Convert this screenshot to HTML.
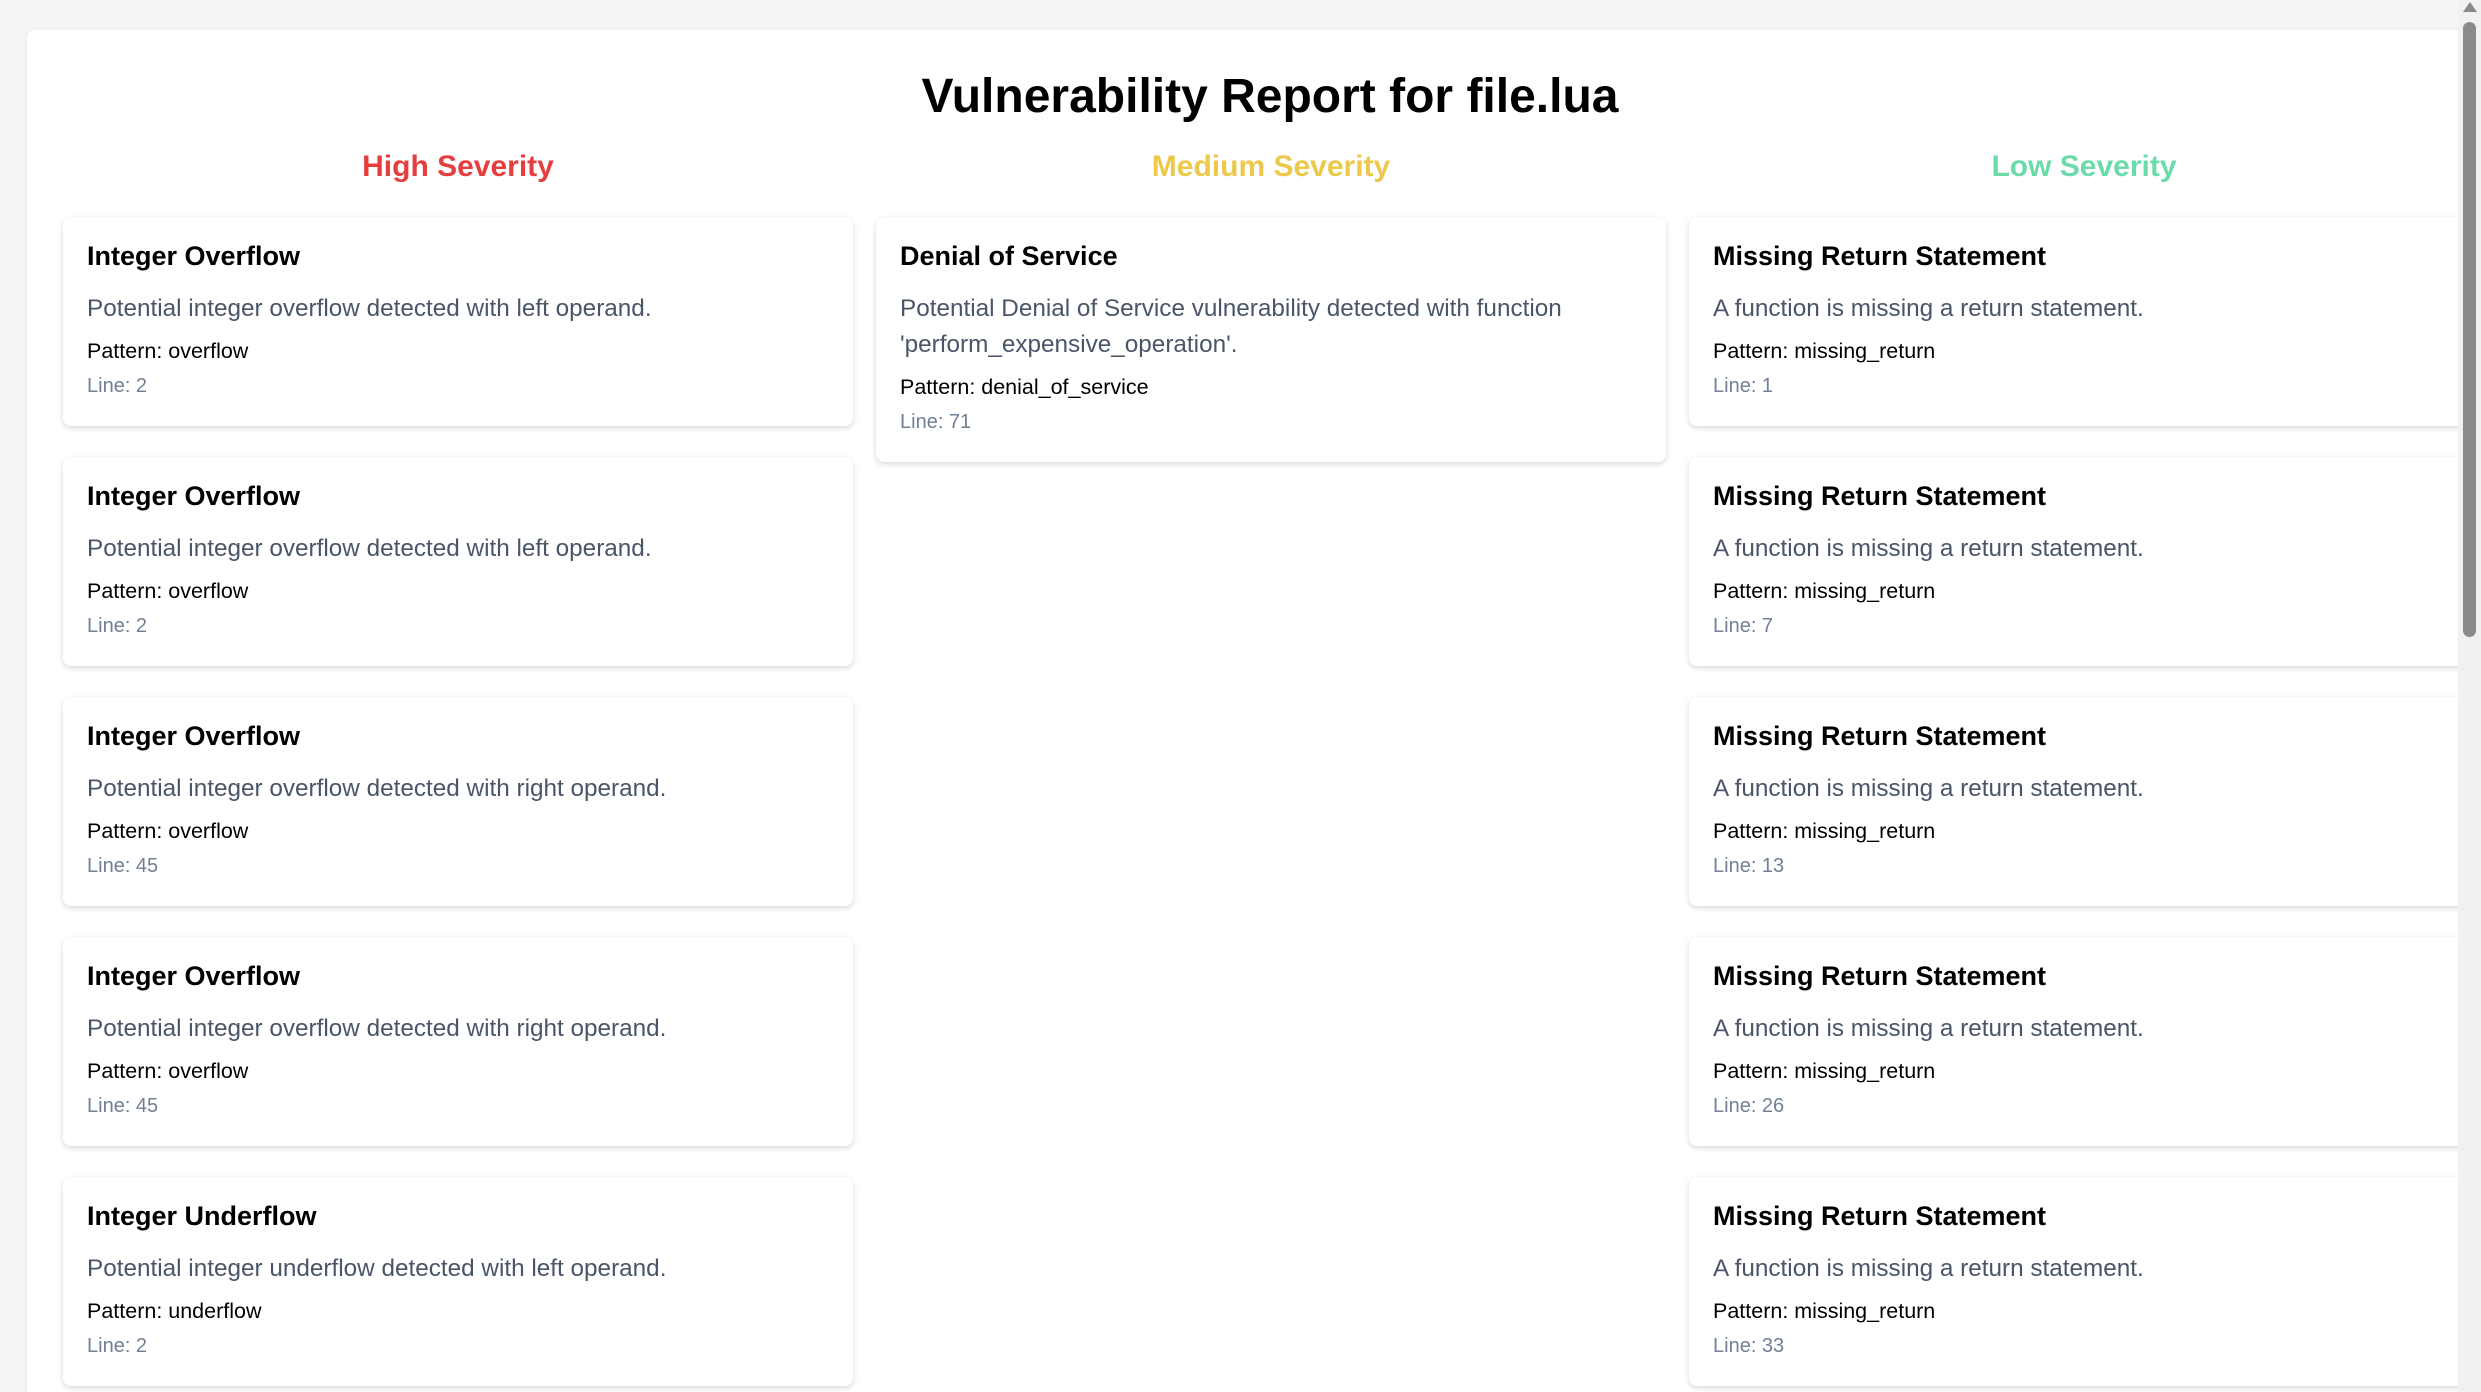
<!DOCTYPE html>
<html><head><meta charset="utf-8"><style>
*{margin:0;padding:0;box-sizing:border-box}
html,body{width:2481px;height:1392px;overflow:hidden;background:#f3f4f6;font-family:"Liberation Sans",Arial,sans-serif}
.wrap{position:absolute;left:27px;top:30px;width:2431px;height:1362px;background:#fff;border-radius:8px 0 0 0;box-shadow:0 1px 4px rgba(0,0,0,.06)}
.sb{position:absolute;left:2458px;top:0;width:23px;height:1392px;background:#f1f1f1}
.sb .th{position:absolute;left:5px;top:22px;width:13px;height:615px;background:#8a8a8a;border-radius:7px}
.sb .ar{position:absolute;left:5px;top:2px;width:0;height:0;border-left:7px solid transparent;border-right:7px solid transparent;border-bottom:10px solid #8a8a8a}
h1{position:absolute;left:0;width:2540px;top:68px;text-align:center;font-size:48px;line-height:58px;font-weight:bold;color:#000}
.h{position:absolute;top:148px;width:790px;text-align:center;font-size:30px;line-height:38px;font-weight:bold}
.card{position:absolute;width:790px;height:209px;background:#fff;border-radius:8px;box-shadow:0 2px 6px rgba(0,0,0,.16)}
.card div{position:absolute;left:24px;white-space:nowrap}
.t{top:23px;font-size:27px;line-height:32px;font-weight:bold;color:#000}
.d{top:74px;font-size:24.3px;line-height:36px;color:#4a5568}
.p{top:121px;font-size:21.5px;line-height:26px;color:#000}
.l{top:156px;font-size:20px;line-height:26px;color:#718096}
</style></head><body>
<div class="wrap"></div>
<h1>Vulnerability Report for file.lua</h1>
<div class="h" style="left:63px;color:#e53e3e">High Severity</div>
<div class="h" style="left:876px;color:#ecc94b">Medium Severity</div>
<div class="h" style="left:1689px;color:#6cdba9">Low Severity</div>

<div class="card" style="left:63px;top:217px"><div class="t">Integer Overflow</div><div class="d">Potential integer overflow detected with left operand.</div><div class="p">Pattern: overflow</div><div class="l">Line: 2</div></div>
<div class="card" style="left:63px;top:457px"><div class="t">Integer Overflow</div><div class="d">Potential integer overflow detected with left operand.</div><div class="p">Pattern: overflow</div><div class="l">Line: 2</div></div>
<div class="card" style="left:63px;top:697px"><div class="t">Integer Overflow</div><div class="d">Potential integer overflow detected with right operand.</div><div class="p">Pattern: overflow</div><div class="l">Line: 45</div></div>
<div class="card" style="left:63px;top:937px"><div class="t">Integer Overflow</div><div class="d">Potential integer overflow detected with right operand.</div><div class="p">Pattern: overflow</div><div class="l">Line: 45</div></div>
<div class="card" style="left:63px;top:1177px"><div class="t">Integer Underflow</div><div class="d">Potential integer underflow detected with left operand.</div><div class="p">Pattern: underflow</div><div class="l">Line: 2</div></div>

<div class="card" style="left:876px;top:217px;height:245px"><div class="t">Denial of Service</div><div class="d">Potential Denial of Service vulnerability detected with function<br>'perform_expensive_operation'.</div><div class="p" style="top:157px">Pattern: denial_of_service</div><div class="l" style="top:192px">Line: 71</div></div>

<div class="card" style="left:1689px;top:217px"><div class="t">Missing Return Statement</div><div class="d">A function is missing a return statement.</div><div class="p">Pattern: missing_return</div><div class="l">Line: 1</div></div>
<div class="card" style="left:1689px;top:457px"><div class="t">Missing Return Statement</div><div class="d">A function is missing a return statement.</div><div class="p">Pattern: missing_return</div><div class="l">Line: 7</div></div>
<div class="card" style="left:1689px;top:697px"><div class="t">Missing Return Statement</div><div class="d">A function is missing a return statement.</div><div class="p">Pattern: missing_return</div><div class="l">Line: 13</div></div>
<div class="card" style="left:1689px;top:937px"><div class="t">Missing Return Statement</div><div class="d">A function is missing a return statement.</div><div class="p">Pattern: missing_return</div><div class="l">Line: 26</div></div>
<div class="card" style="left:1689px;top:1177px"><div class="t">Missing Return Statement</div><div class="d">A function is missing a return statement.</div><div class="p">Pattern: missing_return</div><div class="l">Line: 33</div></div>

<div class="sb"><div class="ar"></div><div class="th"></div></div>
</body></html>
